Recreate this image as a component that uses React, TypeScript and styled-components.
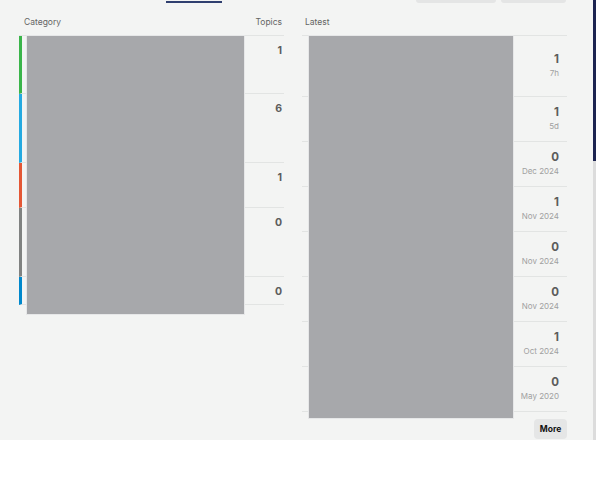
import React from 'react';
import styled, { createGlobalStyle } from 'styled-components';

const GlobalStyle = createGlobalStyle`
  body {
    margin: 0;
    background: #ffffff;
    font-family: Inter, "Liberation Sans", sans-serif;
  }
`;

const Page = styled.div`
  position: relative;
  height: 440px;
  background: #f3f4f3;
  overflow: hidden;
`;

const TopStrip = styled.div`
  display: flex;
  align-items: flex-start;
  height: 3px;
  padding: 0 30px 0 166px;
`;

const TabLine = styled.div`
  margin-top: 1px;
  width: 56px;
  height: 2px;
  background: #2f3f6f;
`;

const TopButton = styled.div<{ $width: number }>`
  width: ${(p) => p.$width}px;
  height: 3px;
  background: #e4e5e5;
  border-radius: 0 0 4px 4px;
`;

const TopButtons = styled.div`
  display: flex;
  gap: 5px;
  margin-left: auto;
`;

const Tables = styled.div`
  display: flex;
  align-items: flex-start;
  gap: 18px;
  margin-top: 12px;
  padding-left: 19px;
`;

const Table = styled.div`
  position: relative;
  width: 265px;
`;

const HeaderRow = styled.div`
  display: flex;
  justify-content: space-between;
  height: 20px;
  border-bottom: 1px solid #e2e4e3;
  font-size: 8.5px;
  line-height: 14px;
  color: #646464;
`;

const HeaderCell = styled.div<{ $left: number; $right: number }>`
  padding: 0 ${(p) => p.$right}px 0 ${(p) => p.$left}px;
`;

const CategoryRow = styled.div<{ $color: string; $height: number }>`
  display: flex;
  justify-content: flex-end;
  height: ${(p) => p.$height - 1}px;
  border-left: 3px solid ${(p) => p.$color};
  border-bottom: 1px solid #e2e4e3;
`;

const TopicCount = styled.div`
  padding: 8px 2px 0 0;
  font-size: 10.5px;
  line-height: 14px;
  font-weight: 700;
  color: #5c5c5c;
`;

const LatestRow = styled.div<{ $height: number }>`
  display: flex;
  flex-direction: column;
  justify-content: center;
  align-items: flex-end;
  height: ${(p) => p.$height - 1}px;
  padding-right: 8px;
  border-bottom: 1px solid #e2e4e3;
`;

const PostCount = styled.div`
  font-size: 11.5px;
  line-height: 14px;
  font-weight: 700;
  color: #5c5c5c;
`;

const PostDate = styled.div`
  font-size: 8px;
  line-height: 14px;
  color: #a0a0a0;
`;

const Redacted = styled.div<{ $left: number; $width: number; $height: number }>`
  position: absolute;
  top: 20px;
  left: ${(p) => p.$left}px;
  width: ${(p) => p.$width}px;
  height: ${(p) => p.$height}px;
  box-sizing: border-box;
  background: #a7a8ab;
  border: 1px solid #e6e7e8;
`;

const Footer = styled.div`
  display: flex;
  justify-content: flex-end;
  margin-top: 7px;
`;

const MoreButton = styled.button`
  width: 33px;
  height: 20px;
  padding: 0;
  border: none;
  border-radius: 4px;
  background: #e5e6e6;
  font-family: Inter, "Liberation Sans", sans-serif;
  font-size: 8.5px;
  font-weight: 700;
  color: #111111;
`;

const Scrollbar = styled.div`
  position: absolute;
  top: 0;
  right: 0;
  width: 3px;
  height: 440px;
  background: #dcdcdc;
`;

const ScrollThumb = styled.div`
  height: 161px;
  background: #1c2350;
`;

const categories = [
  { color: '#3ab54a', height: 58, topics: 1 },
  { color: '#25aae1', height: 69, topics: 6 },
  { color: '#e45735', height: 45, topics: 1 },
  { color: '#808281', height: 69, topics: 0 },
  { color: '#0088cc', height: 28, topics: 0 },
];

const latest = [
  { posts: 1, date: '7h', height: 61 },
  { posts: 1, date: '5d', height: 45 },
  { posts: 0, date: 'Dec 2024', height: 45 },
  { posts: 1, date: 'Nov 2024', height: 45 },
  { posts: 0, date: 'Nov 2024', height: 45 },
  { posts: 0, date: 'Nov 2024', height: 45 },
  { posts: 1, date: 'Oct 2024', height: 45 },
  { posts: 0, date: 'May 2020', height: 45 },
];

const App = () => {
  return (
    <Page>
      <GlobalStyle />
      <TopStrip>
        <TabLine />
        <TopButtons>
          <TopButton $width={80} />
          <TopButton $width={65} />
        </TopButtons>
      </TopStrip>
      <Tables>
        <Table>
          <HeaderRow>
            <HeaderCell $left={5} $right={0}>Category</HeaderCell>
            <HeaderCell $left={0} $right={2}>Topics</HeaderCell>
          </HeaderRow>
          {categories.map((c, i) => (
            <CategoryRow key={i} $color={c.color} $height={c.height}>
              <TopicCount>{c.topics}</TopicCount>
            </CategoryRow>
          ))}
          <Redacted $left={7} $width={219} $height={280} />
        </Table>
        <Table>
          <HeaderRow>
            <HeaderCell $left={3} $right={0}>Latest</HeaderCell>
          </HeaderRow>
          {latest.map((l, i) => (
            <LatestRow key={i} $height={l.height}>
              <PostCount>{l.posts}</PostCount>
              <PostDate>{l.date}</PostDate>
            </LatestRow>
          ))}
          <Redacted $left={6} $width={206} $height={384} />
          <Footer>
            <MoreButton>More</MoreButton>
          </Footer>
        </Table>
      </Tables>
      <Scrollbar>
        <ScrollThumb />
      </Scrollbar>
    </Page>
  );
};

export default App;
